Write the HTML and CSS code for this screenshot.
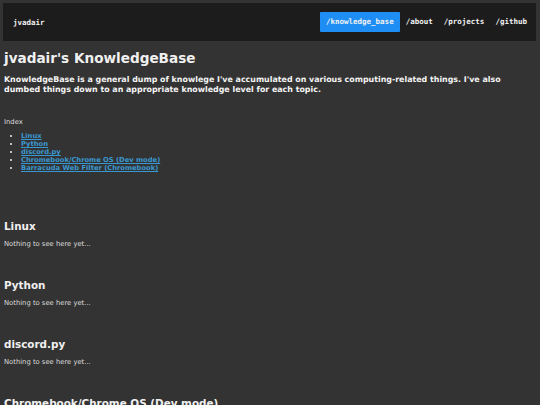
FILE: index.html
```html
<!DOCTYPE html>
<html>
<head>
<meta charset="utf-8">
<link rel="stylesheet" href="styles.css">
</head>
<body>
<header class="topbar">
  <div class="brand">jvadair</div>
  <nav class="nav">
    <a class="nav-item active" href="#">/knowledge_base</a>
    <a class="nav-item" href="#">/about</a>
    <a class="nav-item" href="#">/projects</a>
    <a class="nav-item" href="#">/github</a>
  </nav>
</header>
<main class="content">
  <h1 class="title">jvadair's KnowledgeBase</h1>
  <p class="intro">KnowledgeBase is a general dump of knowlege I've accumulated on various computing-related things. I've also dumbed things down to an appropriate knowledge level for each topic.</p>
  <p class="index-label">Index</p>
  <ul class="index">
    <li><a href="#">Linux</a></li>
    <li><a href="#">Python</a></li>
    <li><a href="#">discord.py</a></li>
    <li><a href="#">Chromebook/Chrome OS (Dev mode)</a></li>
    <li><a href="#">Barracuda Web Filter (Chromebook)</a></li>
  </ul>
  <section class="topic">
    <h2>Linux</h2>
    <p>Nothing to see here yet...</p>
  </section>
  <section class="topic">
    <h2>Python</h2>
    <p>Nothing to see here yet...</p>
  </section>
  <section class="topic">
    <h2>discord.py</h2>
    <p>Nothing to see here yet...</p>
  </section>
  <section class="topic">
    <h2>Chromebook/Chrome OS (Dev mode)</h2>
    <p>Nothing to see here yet...</p>
  </section>
</main>
</body>
</html>
```
FILE: styles.css
```css
html, body {
  margin: 0;
  padding: 0;
  background: #333333;
}
body {
  padding: 3px 4px 0 3px;
  font-family: "DejaVu Sans", Verdana, sans-serif;
  color: #ececec;
}
.topbar {
  background: #1c1c1c;
  height: 38px;
  display: flex;
  align-items: center;
  justify-content: space-between;
  padding: 0 4px 0 10px;
}
.brand, .nav-item {
  font-family: "DejaVu Sans Mono", monospace;
  font-weight: bold;
  font-size: 7.5px;
  color: #f2f2f2;
}
.nav {
  display: flex;
  align-items: center;
  gap: 1px;
}
.nav-item {
  text-decoration: none;
  padding: 0 5px;
  height: 20px;
  line-height: 20px;
  border-radius: 1px;
}
.nav-item.active {
  background: #1e8ef5;
  padding: 0 6px;
}
.content {
  padding: 0 0 0 1px;
}
.title {
  margin: 7px 0 0;
  font-size: 13.6px;
  line-height: 20px;
  font-weight: bold;
  color: #f0f0f0;
}
.intro {
  margin: 7px 0 0;
  font-size: 7.9px;
  line-height: 10px;
  font-weight: bold;
  color: #f4f4f4;
}
.index-label {
  margin: 22.5px 0 0;
  font-size: 6.8px;
  line-height: 9px;
  color: #dddddd;
}
.index {
  margin: 5.5px 0 0;
  padding-left: 17px;
  font-size: 6.75px;
  line-height: 8px;
  font-weight: bold;
}
.index a {
  color: #3a98d0;
}
.topic {
  margin-top: 47px;
}
.topic + .topic {
  margin-top: 30px;
}
.topic h2 {
  margin: 0;
  font-size: 10.4px;
  line-height: 14px;
  font-weight: bold;
  color: #f0f0f0;
}
.topic p {
  margin: 7px 0 0;
  font-size: 6.8px;
  line-height: 8px;
  color: #dddddd;
}
```
